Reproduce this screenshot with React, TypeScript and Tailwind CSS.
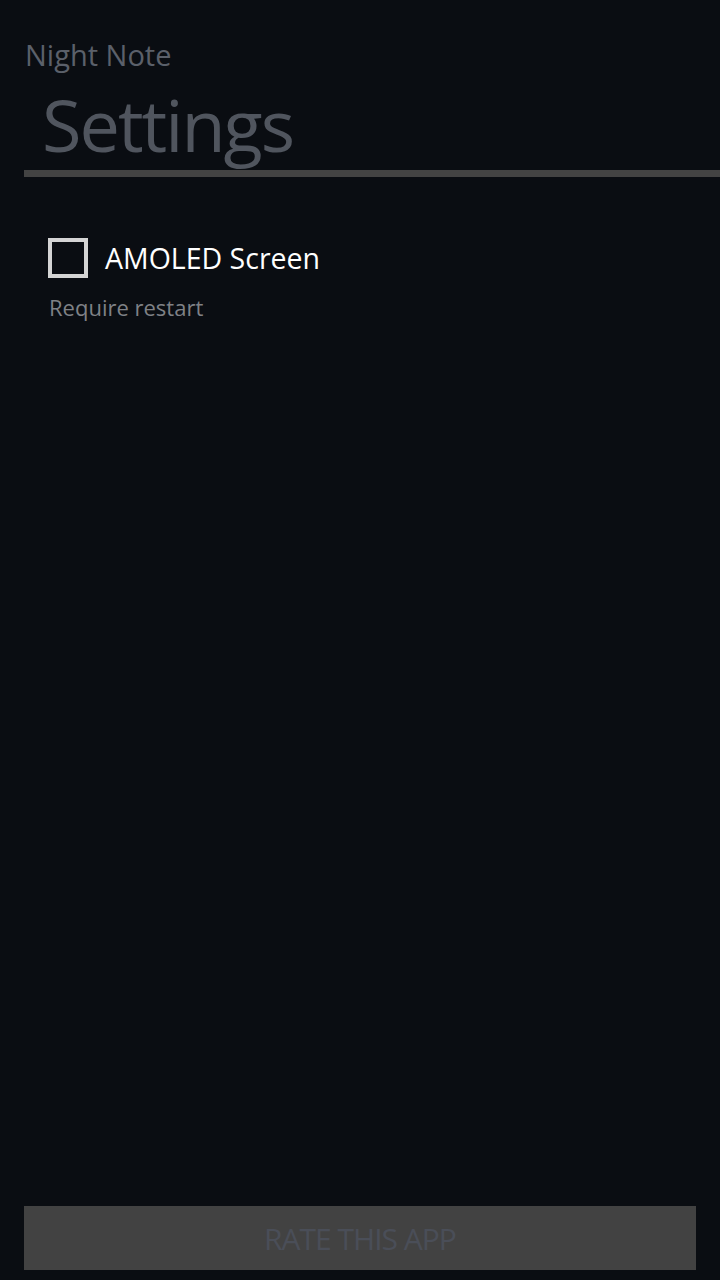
import React, { useState } from 'react';

export default function App() {
  const [amoled, setAmoled] = useState(false);

  return (
    <div
      className="w-[720px] h-[1280px] bg-[#0a0d12] flex flex-col overflow-hidden"
      style={{ fontFamily: '"Open Sans", "Noto Sans", sans-serif' }}
    >
      {/* Header */}
      <div className="pl-[24px] pt-[36px]">
        <div className="text-[29px] leading-[38px] text-[#5b606a] pl-[1px]">Night Note</div>
        <div className="text-[72px] leading-[92px] text-[#50555e] pl-[18px] pt-[4px] tracking-[-2px]">Settings</div>
        <div className="h-[7px] bg-[#434343]" />
      </div>

      {/* Options */}
      <div className="flex-1 pl-[48px] pt-[61px]">
        <button
          onClick={() => setAmoled(!amoled)}
          className="flex items-center gap-[17px]"
        >
          <span className="w-[40px] h-[40px] border-[4px] border-[#d4d4d4] flex items-center justify-center">
            {amoled && <span className="w-[20px] h-[20px] bg-[#d4d4d4]" />}
          </span>
          <span className="text-[28.5px] leading-[40px] text-white">AMOLED Screen</span>
        </button>
        <div className="text-[22px] leading-[30px] text-[#7f8186] mt-[14px] pl-[1px]">Require restart</div>
      </div>

      {/* Footer button */}
      <div className="px-[24px] pb-[10px]">
        <button className="w-full h-[64px] bg-[#424242] text-[#4a4e58] text-[30px] tracking-[-1px]">
          RATE THIS APP
        </button>
      </div>
    </div>
  );
}
